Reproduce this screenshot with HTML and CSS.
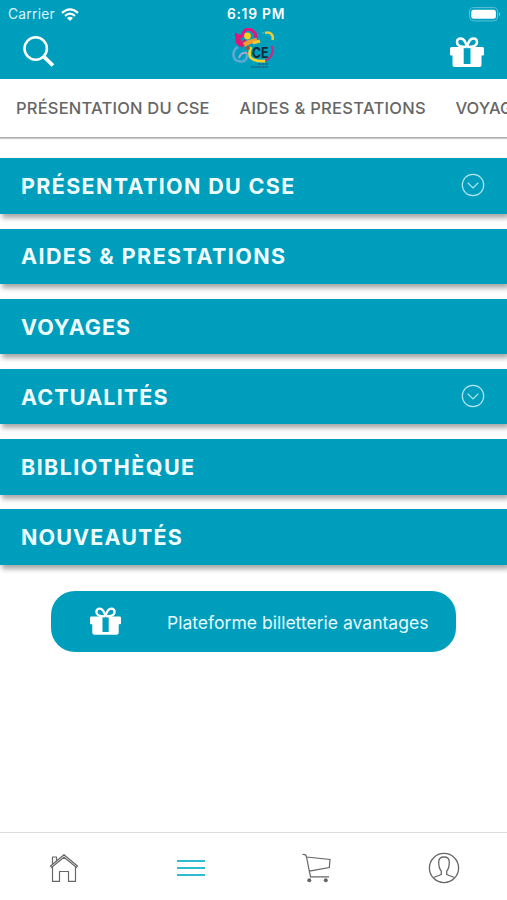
FILE: index.html
```html
<!DOCTYPE html>
<html lang="fr">
<head>
<meta charset="utf-8">
<title>CSE</title>
<link rel="stylesheet" href="styles.css">
</head>
<body>
<svg class="defs" aria-hidden="true">
  <symbol id="gift" viewBox="0 0 34 30">
    <path d="M16.500 10C12 10 7 9 7 5.200C7 3 8.500 1.500 10.800 1.500C14 1.500 16 6 17 10C18 6 20 1.500 23.200 1.500C25.500 1.500 27 3 27 5.200C27 9 22 10 17.500 10" fill="none" stroke="currentColor" stroke-width="2.500"/>
    <path fill="currentColor" fill-rule="evenodd" d="M1.500 10H32.500Q34 10 34 11.500V17.500Q34 18.500 33 18.500H31.500V28Q31.500 30 29.500 30H4.500Q2.500 30 2.500 28V18.500H1Q0 18.500 0 17.500V11.500Q0 10 1.500 10ZM13.700 10.500V27H20.500V10.500Z"/>
  </symbol>
  <symbol id="chevron" viewBox="0 0 24 24">
    <g fill="none" stroke="currentColor" stroke-width="1.200"><circle cx="12" cy="12" r="10.700"/><path d="M6.700 9.800L12 15L17.300 9.800"/></g>
  </symbol>
</svg>
<div class="app">
  <header class="header">
    <div class="status">
      <div class="carrier"><span>Carrier</span>
        <svg class="wifi" viewBox="0 0 18 13"><g fill="none" stroke="currentColor" stroke-width="2.200"><path d="M1 4.800Q9 -2.200 17 4.800"/><path d="M4 7.900Q9 3.500 14 7.900"/></g><path fill="currentColor" d="M6 9.900Q9 7.700 12 9.900L9 13Z"/></svg>
      </div>
      <div class="time">6:19 PM</div>
      <svg class="battery" viewBox="0 0 32 15"><rect x=".6" y=".6" width="28" height="13.300" rx="4" fill="none" stroke="#5fc0d5" stroke-width="1"/><rect x="2.300" y="2.800" width="24.600" height="8.900" rx="2.300" fill="#fff"/><path d="M30 5Q32 7.200 30 9.500Z" fill="#8fd4e3"/></svg>
    </div>
    <div class="toolbar">
      <svg class="search" viewBox="0 0 32 32"><g fill="none" stroke="currentColor"><circle cx="12.700" cy="12.500" r="11.200" stroke-width="2.500"/><path d="M20.800 20.700L30 29.500" stroke-width="3.800"/></g></svg>
      <svg class="logo" viewBox="0 0 44 44">
        <g fill="none">
          <path d="M9 18L5 14L4.500 7L9 9L13 2L18 1L23 5L24 10" stroke="#e8127e" stroke-width="3"/>
          <path d="M6 10L10 17L13 12" stroke="#d71b6d" stroke-width="3"/>
          <path d="M6 19C0 22 0 31 6 33C12 35 16 31 15 25" stroke="#55a9d5" stroke-width="2.800"/>
          <path d="M7 30Q9 24 15 25" stroke="#a9a6d0" stroke-width="2"/>
          <path d="M33 5C38 3 42 7 40.500 12" stroke="#e8cf37" stroke-width="2.500"/>
          <path d="M19 19Q16 27 19 30Q24 34 33 33" stroke="#efd62e" stroke-width="2.800"/>
          <path d="M39.500 18Q43 27 34 32.500" stroke="#cf2681" stroke-width="2.200"/>
          <path d="M12 17L17 14L25 12" stroke="#ef9b32" stroke-width="4.500"/>
          <path d="M21 15L28 13" stroke="#f0cb2f" stroke-width="3"/>
        </g>
        <circle cx="15.500" cy="8" r="3.400" fill="#f7cd20"/><circle cx="16" cy="20" r="2" fill="#9a5b33"/><circle cx="31" cy="5" r="1" fill="#4caed1"/>
        <text x="20" y="29.500" textLength="16.500" lengthAdjust="spacingAndGlyphs" class="logo-name">CE</text>
        <path d="M26 36H36M19 39H36" stroke="#176b87" stroke-width="1.300" stroke-dasharray="3 .5"/>
      </svg>
      <svg class="gift-top"><use href="#gift"/></svg>
    </div>
  </header>
  <nav class="tabs"><span class="tab-one">PRÉSENTATION DU CSE</span><span class="tab-two">AIDES &amp; PRESTATIONS</span><span>VOYAGES</span></nav>
  <main class="menu">
    <div class="item"><span>PRÉSENTATION DU CSE</span><svg class="chevron"><use href="#chevron"/></svg></div>
    <div class="item wide"><span>AIDES &amp; PRESTATIONS</span></div>
    <div class="item tight"><span>VOYAGES</span></div>
    <div class="item snug"><span>ACTUALITÉS</span><svg class="chevron"><use href="#chevron"/></svg></div>
    <div class="item wide"><span>BIBLIOTHÈQUE</span></div>
    <div class="item snug"><span>NOUVEAUTÉS</span></div>
  </main>
  <div class="platform"><svg class="gift-small"><use href="#gift"/></svg><span>Plateforme billetterie avantages</span></div>
  <footer class="bottom">
    <div><svg class="nav-icon" viewBox="0 0 32 32"><g fill="none" stroke="currentColor" stroke-width="1.200" stroke-linejoin="round"><path d="M2.500 14L16 2.700L29.500 14L28.300 15.300L16 5.200L3.700 15.300Z"/><path d="M4.500 12V5H8.500V8.800M4.500 15V29.300H11.500V19.500H20.500V29.300H27.500V15"/></g></svg></div>
    <div><svg class="nav-icon current" viewBox="0 0 32 32"><path d="M2 9H30M2 16H30M2 23H30" stroke="currentColor" stroke-width="2.200"/></svg></div>
    <div><svg class="nav-icon" viewBox="0 0 32 32"><g fill="none" stroke="currentColor" stroke-width="1.200"><path d="M1.500 2.500Q5 2 5.500 5L9.500 24.800H28M5.700 5L29 7.500L28.300 15.500L8.300 19.200"/></g><g fill="currentColor"><circle cx="8.300" cy="28.300" r="2"/><circle cx="24.800" cy="28.300" r="2"/></g></svg></div>
    <div><svg class="nav-icon" viewBox="0 0 32 32"><g fill="none" stroke="currentColor" stroke-width="1.300"><circle cx="16" cy="16" r="14.600"/><path d="M5.500 25.500Q11 23.500 13.300 22.500V19.200Q10.700 16 10.700 10Q10.700 5 16 5Q21.300 5 21.300 10Q21.300 16 18.700 19.200V22.500Q21 23.500 26.500 25.500"/></g></svg></div>
  </footer>
</div>
</body>
</html>
```
FILE: styles.css
```css
* { box-sizing: border-box; }
body { margin: 0; background: #fff; font-family: Inter, "Liberation Sans", sans-serif; }
svg { display: block; flex: none; }
.defs { position: absolute; width: 0; height: 0; }
.app { width: 507px; height: 900px; display: flex; flex-direction: column; overflow: hidden; }
.header { height: 79px; flex: none; background: #009ebd; color: #fff; }
.status { height: 27px; display: grid; grid-template-columns: 1fr auto 1fr; align-items: center; padding: 1px 6px 0 8px; }
.carrier { display: flex; align-items: center; gap: 6px; font-size: 13.8px; color: #d9f5fa; letter-spacing: .25px; }
.wifi { width: 18px; height: 13px; color: #fff; }
.time { font-size: 13.8px; font-weight: 600; letter-spacing: .75px; padding-left: 3px; }
.battery { width: 32px; height: 15px; justify-self: end; }
.toolbar { height: 52px; display: grid; grid-template-columns: 1fr 44px 1fr; align-items: center; padding: 0 23px 2px 22.5px; }
.search { width: 32px; height: 32px; }
.logo { width: 44px; height: 44px; margin: -4px 0 0 .75px; }
.logo-name { font: 700 14.5px Inter, sans-serif; fill: #102c37; }
.gift-top { width: 34px; height: 30px; justify-self: end; }
.tabs { height: 59px; flex: none; display: flex; align-items: center; gap: 29px; padding-left: 16px; white-space: nowrap; font-size: 16.5px; font-weight: 450; color: #666; border-bottom: 1px solid #aaa; box-shadow: 0 1px 1px #ccc; }
.tabs span { flex: none; }
.tab-one { width: 194.5px; letter-spacing: .2px; }
.tab-two { width: 187px; letter-spacing: .3px; }
.menu { display: flex; flex-direction: column; gap: 14.7px; padding-top: 20.4px; }
.item { height: 55.5px; display: flex; align-items: center; justify-content: space-between; padding: 0 22.5px 0 21px; background: #009ebd; color: #effcff; font-size: 21.5px; font-weight: 700; letter-spacing: 1.35px; box-shadow: 2px 4px 5px rgba(0,0,0,.35); }
.wide { letter-spacing: 1.42px; }
.tight { letter-spacing: .95px; }
.snug { letter-spacing: 1.12px; }
.chevron { width: 24px; height: 24px; color: #b2e5ee; margin-top: -2px; }
.platform { width: 405px; height: 61px; flex: none; margin: 26.4px 0 0 51.4px; display: flex; align-items: center; gap: 45.6px; padding: 2px 0 0 39px; border-radius: 24px; background: #009ebd; color: #e5f9fc; font-size: 17.55px; white-space: nowrap; }
.gift-small { width: 31px; height: 28px; margin-top: -4px; color: #fff; }
.bottom { height: 68px; flex: none; margin-top: auto; display: grid; grid-template-columns: repeat(4, 1fr); align-items: center; justify-items: center; border-top: 1.5px solid #ddd; color: #666; padding: 3px 0 0 1px; }
.nav-icon { width: 32px; height: 32px; }
.current { color: #2dbcd2; }
```
